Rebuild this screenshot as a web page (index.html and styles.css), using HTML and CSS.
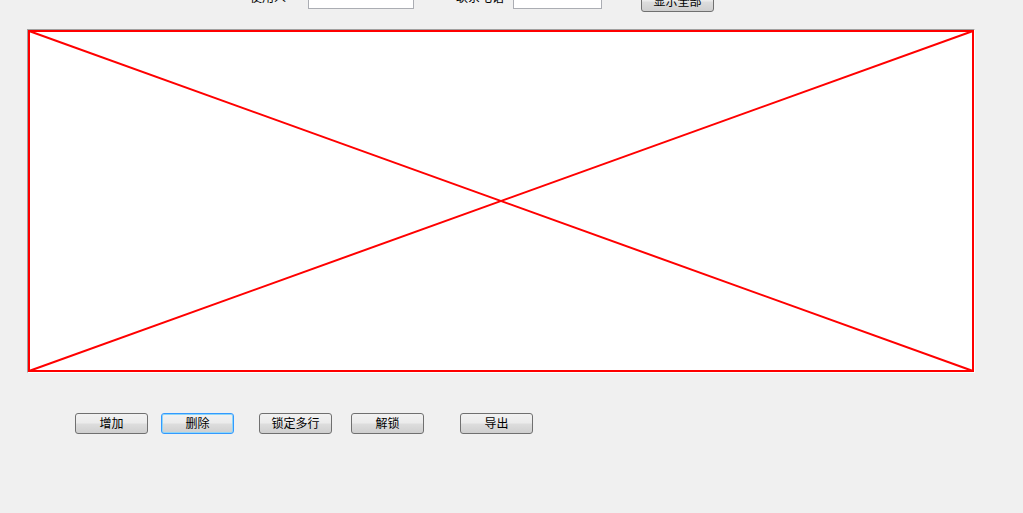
FILE: index.html
```html
<!doctype html>
<html lang="zh-CN">
<head>
  <meta charset="UTF-8">
  <title>使用人管理</title>
  <link rel="stylesheet" href="styles.css">
</head>
<body>
  <div class="toolbar">
    <label class="field-label" for="user">使用人</label>
    <input class="text-input user-input" id="user" type="text">
    <label class="field-label phone-label" for="phone">联系电话</label>
    <input class="text-input phone-input" id="phone" type="text">
    <button class="btn show-all">显示全部</button>
  </div>

  <div class="grid-box">
    <svg class="grid-error" width="946" height="342" viewBox="0 0 946 342">
      <rect x="1" y="1" width="944" height="340" fill="#ffffff" stroke="#ff0000" stroke-width="2"/>
      <line x1="1" y1="1" x2="945" y2="341" stroke="#ff0000" stroke-width="2"/>
      <line x1="1" y1="341" x2="945" y2="1" stroke="#ff0000" stroke-width="2"/>
    </svg>
  </div>

  <div class="actions">
    <button class="btn">增加</button>
    <button class="btn btn-focus gap-sm">删除</button>
    <button class="btn gap-lg">锁定多行</button>
    <button class="btn gap-md">解锁</button>
    <button class="btn gap-xl">导出</button>
  </div>
</body>
</html>
```

FILE: styles.css
```css
* {
  box-sizing: border-box;
}

body {
  margin: 0;
  background-color: #f0f0f0;
  font-family: "Noto Sans CJK SC", "Liberation Sans", sans-serif;
  font-size: 12px;
  color: #000;
  overflow: hidden;
}

.toolbar {
  display: flex;
  align-items: flex-start;
  height: 41px;
  margin-top: -12px;
  padding-left: 250px;
}

.field-label {
  margin-top: 1px;
  line-height: 16px;
}

.text-input {
  height: 21px;
  margin-left: 22px;
  border: 1px solid #abadb3;
  background-color: #fff;
  padding: 0 2px;
  font: inherit;
}

.user-input {
  width: 106px;
}

.phone-label {
  margin-left: 42px;
}

.phone-input {
  width: 89px;
  margin-left: 9px;
}

.grid-box {
  width: 948px;
  height: 344px;
  margin-left: 27px;
  border-top: 1px solid #a0a0a0;
  border-left: 1px solid #a0a0a0;
  border-right: 1px solid #ffffff;
  border-bottom: 1px solid #ffffff;
}

.grid-error {
  display: block;
}

.actions {
  display: flex;
  margin-top: 40px;
  padding-left: 75px;
}

.btn {
  width: 73px;
  height: 21px;
  padding: 0 0 2px;
  border: 1px solid #707070;
  border-radius: 3px;
  background: linear-gradient(#f2f2f2 0%, #ebebeb 48%, #dddddd 52%, #cfcfcf 100%);
  font: inherit;
  line-height: 15px;
  color: #000;
}

.show-all {
  margin-top: 3px;
  margin-left: 39px;
}

.btn-focus {
  border-color: #3399ff;
  box-shadow: inset 0 0 0 1px #8fd6f7;
}

.gap-sm {
  margin-left: 13px;
}

.gap-lg {
  margin-left: 25px;
}

.gap-md {
  margin-left: 19px;
}

.gap-xl {
  margin-left: 36px;
}
```
